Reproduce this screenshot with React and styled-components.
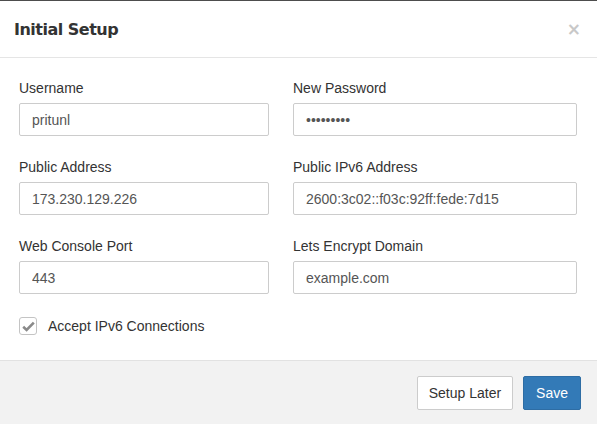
import React, { useState } from 'react';
import styled, { createGlobalStyle } from 'styled-components';

const Global = createGlobalStyle`
    html, body {
        margin:0;
        padding:0;
        background:#fff;
    }
    body{
        font-family:"Liberation Sans", Arial, sans-serif;
        font-size:14px;
        color:#333;
    }
`

const Modal = styled.div`
    width:597px;
    height:424px;
    display:flex;
    flex-direction:column;
    border-top:1px solid #4d4d4d;
    box-sizing:border-box;
    background:#fff;
`

const Header = styled.div`
    height:56px;
    display:flex;
    align-items:center;
    justify-content:space-between;
    padding:0 16px 0 14px;
    border-bottom:1px solid #e5e5e5;
    h4{
        margin:0;
        font-family:"DejaVu Sans", sans-serif;
        font-weight:bold;
        font-size:16px;
        letter-spacing:-0.5px;
        color:#333;
    }
`

const Close = styled.button`
    border:none;
    background:transparent;
    padding:0;
    font-family:"DejaVu Sans", sans-serif;
    font-weight:bold;
    font-size:17px;
    line-height:1;
    color:#c8c8c8;
    cursor:pointer;
`

const Body = styled.div`
    flex:1;
    padding:20px 20px 0 19px;
`

const Grid = styled.div`
    display:grid;
    grid-template-columns:250px 284px;
    column-gap:24px;
    row-gap:21px;
`

const Field = styled.div`
    display:flex;
    flex-direction:column;
    label{
        line-height:20px;
        margin-bottom:5px;
    }
`

const Input = styled.input`
    height:33px;
    box-sizing:border-box;
    border:1px solid #ccc;
    border-radius:2px;
    padding:0 12px;
    font-family:"Liberation Sans", Arial, sans-serif;
    font-size:14px;
    color:#555;
    outline:none;
`

const CheckRow = styled.label`
    display:flex;
    align-items:center;
    gap:11px;
    margin-top:23px;
    cursor:pointer;
`

const Box = styled.span`
    width:16px;
    height:16px;
    border:1px solid #c4c4c4;
    border-radius:3px;
    display:flex;
    align-items:center;
    justify-content:center;
    background:#fff;
`

const Footer = styled.div`
    height:63px;
    background:#f2f2f2;
    border-top:1px solid #e2e2e2;
    display:flex;
    align-items:center;
    justify-content:flex-end;
    gap:10px;
    padding:0 16px 0 0;
`

const Button = styled.button`
    height:34px;
    padding:0 ${p => p.$primary ? '12px' : '11px'};
    border-radius:2px;
    border:1px solid ${p => p.$primary ? '#2e6da4' : '#ccc'};
    background:${p => p.$primary ? '#337ab7' : '#fff'};
    color:${p => p.$primary ? '#fff' : '#333'};
    font-family:"Liberation Sans", Arial, sans-serif;
    font-size:14px;
    cursor:pointer;
`

const fields = [
    { label:'Username', value:'pritunl' },
    { label:'New Password', value:'passwords', type:'password' },
    { label:'Public Address', value:'173.230.129.226' },
    { label:'Public IPv6 Address', value:'2600:3c02::f03c:92ff:fede:7d15' },
    { label:'Web Console Port', value:'443' },
    { label:'Lets Encrypt Domain', value:'example.com' },
]

const App = () => {
    const [ipv6, setipv6] = useState(true);
    return (
        <>
            <Global />
            <Modal>
                <Header>
                    <h4>Initial Setup</h4>
                    <Close>×</Close>
                </Header>
                <Body>
                    <Grid>
                        {fields.map(f => (
                            <Field key={f.label}>
                                <label>{f.label}</label>
                                <Input type={f.type || 'text'} defaultValue={f.value} />
                            </Field>
                        ))}
                    </Grid>
                    <CheckRow onClick={() => setipv6(!ipv6)}>
                        <Box>
                            {ipv6 && (
                                <svg width="13" height="11" viewBox="0 0 13 11">
                                    <path d="M1.2 5.8 L4.6 9 L11.8 1.6" fill="none" stroke="#8a8a8a" strokeWidth="2.6" />
                                </svg>
                            )}
                        </Box>
                        Accept IPv6 Connections
                    </CheckRow>
                </Body>
                <Footer>
                    <Button>Setup Later</Button>
                    <Button $primary>Save</Button>
                </Footer>
            </Modal>
        </>
    );
};

export default App;
